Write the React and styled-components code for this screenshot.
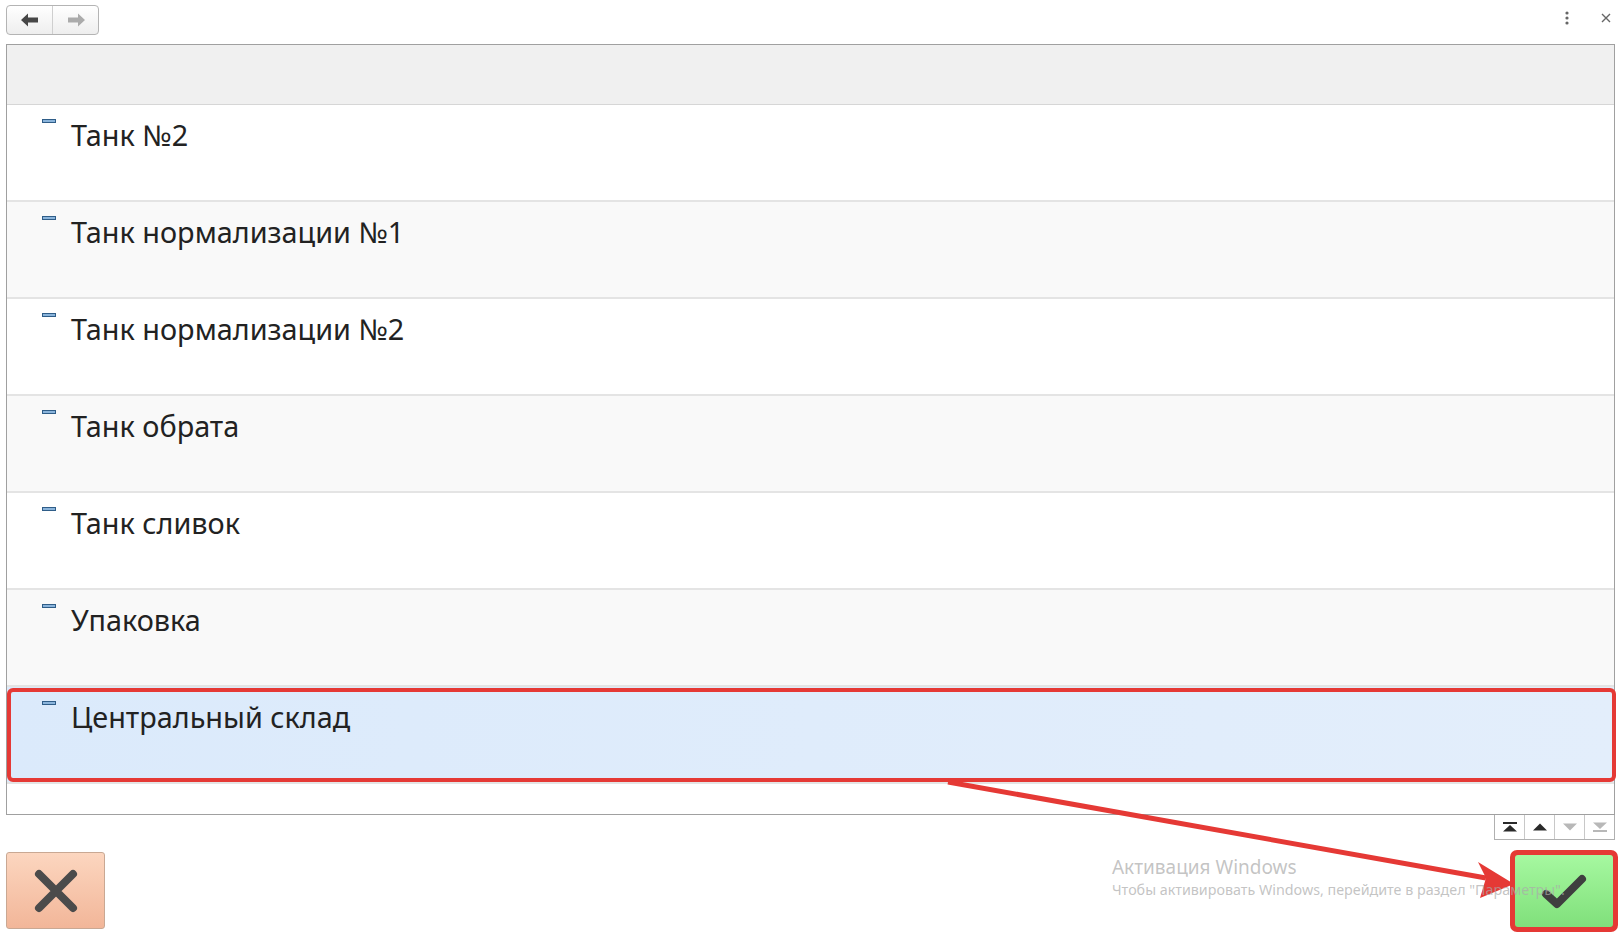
import React from "react";
import styled, { createGlobalStyle } from "styled-components";

const Global = createGlobalStyle`
  html, body { margin: 0; padding: 0; background: #fff; }
  body { width: 1620px; height: 939px; overflow: hidden; font-family: "Noto Sans", "Open Sans", sans-serif; }
`;

const Page = styled.div`
  position: relative;
  width: 1620px;
  height: 939px;
  padding: 0 5px 0 6px;
  box-sizing: border-box;
  display: flex;
  flex-direction: column;
`;

const TopBar = styled.div`
  height: 44px;
  display: flex;
  align-items: flex-start;
  justify-content: space-between;
`;

const NavGroup = styled.div`
  margin-top: 5px;
  display: flex;
  height: 30px;
  border: 1px solid #b4b4b4;
  border-radius: 4px;
  background: linear-gradient(#ffffff, #eeeeee);
  box-sizing: border-box;
  overflow: hidden;
`;

const NavBtn = styled.div`
  width: 45px;
  display: flex;
  align-items: center;
  justify-content: center;
  border-left: ${(p) => (p.$first ? "none" : "1px solid #cfcfcf")};
`;

const WinTools = styled.div`
  display: flex;
  align-items: center;
  gap: 32px;
  margin-top: 11px;
  margin-right: 4px;
`;

const List = styled.div`
  height: 771px;
  border: 1px solid #a0a0a0;
  box-sizing: border-box;
  display: flex;
  flex-direction: column;
  background: #fff;
`;

const ListHeader = styled.div`
  height: 59px;
  background: #f0f0f0;
  border-bottom: 1px solid #d6d6d6;
  flex: none;
`;

const Row = styled.div`
  position: relative;
  height: 97px;
  flex: none;
  box-sizing: border-box;
  display: flex;
  align-items: flex-start;
  padding: 12px 0 0 35px;
  background: ${(p) => (p.$selected ? "linear-gradient(90deg,#dbeafb,#e3eefb)" : p.$alt ? "#f9f9f9" : "#ffffff")};
  border-bottom: 2px solid #e4e4e4;
  &::after {
    content: "";
    display: ${(p) => (p.$selected ? "block" : "none")};
    position: absolute;
    left: 0;
    right: -2px;
    top: 1px;
    bottom: 0px;
    border: 4px solid #e53935;
    border-radius: 6px;
  }
`;

const Marker = styled.span`
  width: 14px;
  height: 4px;
  box-sizing: border-box;
  background: #8ab4db;
  border: 1px solid #2f5d88;
  margin-top: 2px;
  flex: none;
`;

const RowText = styled.span`
  margin-left: 15px;
  font-size: 28.8px;
  line-height: 36px;
  color: #222;
  white-space: nowrap;
`;

const Footer = styled.div`
  flex: 1;
  display: flex;
  flex-direction: column;
`;

const ScrollGroup = styled.div`
  align-self: flex-end;
  display: flex;
  width: 121px;
  height: 25px;
  border: 1px solid #b0b0b0;
  border-top: none;
  box-sizing: border-box;
`;

const ScrollBtn = styled.div`
  flex: 1;
  display: flex;
  align-items: center;
  justify-content: center;
  border-left: ${(p) => (p.$first ? "none" : "1px solid #c8c8c8")};
  background: #fff;
  color: ${(p) => (p.$disabled ? "#b8b8b8" : "#2a2a2a")};
`;

const BottomRow = styled.div`
  margin-top: 12px;
  display: flex;
  align-items: flex-start;
  justify-content: space-between;
`;

const CancelBtn = styled.div`
  width: 99px;
  height: 77px;
  box-sizing: border-box;
  border: 1px solid #c9a893;
  border-radius: 3px;
  background: linear-gradient(#fcd6bf, #f2b699);
  display: flex;
  align-items: center;
  justify-content: center;
`;

const Watermark = styled.div`
  position: absolute;
  left: 1112px;
  top: 855px;
  z-index: 3;
  color: rgba(170, 170, 170, 0.7);
  display: flex;
  flex-direction: column;
  font-family: "Noto Sans", sans-serif;
  pointer-events: none;
`;

const WmTitle = styled.div`
  font-size: 19px;
  line-height: 24px;
`;

const WmText = styled.div`
  font-size: 14.3px;
  line-height: 20px;
  margin-top: 1px;
  white-space: nowrap;
`;

const OkWrap = styled.div`
  margin-top: -2px;
  margin-right: -3px;
  padding: 5px;
  border-radius: 7px;
  background: #e53935;
  position: relative;
  z-index: 2;
`;

const OkBtn = styled.div`
  width: 98px;
  height: 72px;
  border-radius: 3px;
  background: linear-gradient(#a6f8a0, #80e07b);
  display: flex;
  align-items: center;
  justify-content: center;
`;

const Overlay = styled.svg`
  position: absolute;
  left: 0;
  top: 0;
  pointer-events: none;
  z-index: 1;
`;

const items = [
  "Танк №2",
  "Танк нормализации №1",
  "Танк нормализации №2",
  "Танк обрата",
  "Танк сливок",
  "Упаковка",
  "Центральный склад",
];

const ArrowLeft = ({ color }) => (
  <svg width="18" height="14" viewBox="0 0 18 14">
    <path d="M0 7 L7 0.5 L7 4.5 L17 4.5 L17 9.5 L7 9.5 L7 13.5 Z" fill={color} />
  </svg>
);

const ArrowRight = ({ color }) => (
  <svg width="18" height="14" viewBox="0 0 18 14">
    <path d="M18 7 L11 0.5 L11 4.5 L1 4.5 L1 9.5 L11 9.5 L11 13.5 Z" fill={color} />
  </svg>
);

export default function App() {
  return (
    <>
      <Global />
      <Page>
        <TopBar>
          <NavGroup>
            <NavBtn $first>
              <ArrowLeft color="#474747" />
            </NavBtn>
            <NavBtn>
              <ArrowRight color="#ababab" />
            </NavBtn>
          </NavGroup>
          <WinTools>
            <svg width="4" height="14" viewBox="0 0 4 14">
              <circle cx="2" cy="2" r="1.6" fill="#666" />
              <circle cx="2" cy="7" r="1.6" fill="#666" />
              <circle cx="2" cy="12" r="1.6" fill="#666" />
            </svg>
            <svg width="10" height="10" viewBox="0 0 10 10">
              <path d="M1 1 L9 9 M9 1 L1 9" stroke="#666" strokeWidth="1.4" />
            </svg>
          </WinTools>
        </TopBar>
        <List>
          <ListHeader />
          {items.map((t, i) => (
            <Row key={t} $alt={i % 2 === 1} $selected={i === items.length - 1}>
              <Marker />
              <RowText>{t}</RowText>
            </Row>
          ))}
        </List>
        <Footer>
          <ScrollGroup>
            <ScrollBtn $first>
              <svg width="14" height="10" viewBox="0 0 14 10">
                <rect x="0" y="0" width="14" height="2" fill="currentColor" />
                <path d="M0 9.5 L7 3 L14 9.5 Z" fill="currentColor" />
              </svg>
            </ScrollBtn>
            <ScrollBtn>
              <svg width="14" height="8" viewBox="0 0 14 8">
                <path d="M0 7.5 L7 0.5 L14 7.5 Z" fill="currentColor" />
              </svg>
            </ScrollBtn>
            <ScrollBtn $disabled>
              <svg width="14" height="8" viewBox="0 0 14 8">
                <path d="M0 0.5 L7 7.5 L14 0.5 Z" fill="currentColor" />
              </svg>
            </ScrollBtn>
            <ScrollBtn $disabled>
              <svg width="14" height="10" viewBox="0 0 14 10">
                <path d="M0 0.5 L7 7 L14 0.5 Z" fill="currentColor" />
                <rect x="0" y="8" width="14" height="2" fill="currentColor" />
              </svg>
            </ScrollBtn>
          </ScrollGroup>
          <BottomRow>
            <CancelBtn>
              <svg width="44" height="44" viewBox="0 0 44 44">
                <path d="M5 5 L39 39 M39 5 L5 39" stroke="#4b4b4b" strokeWidth="8" strokeLinecap="round" />
              </svg>
            </CancelBtn>
            <OkWrap>
              <OkBtn>
                <svg width="46" height="36" viewBox="0 0 46 36">
                  <path d="M5 21 L16 31 L41 6" fill="none" stroke="#3f3f3f" strokeWidth="8" strokeLinecap="round" strokeLinejoin="round" />
                </svg>
              </OkBtn>
            </OkWrap>
          </BottomRow>
        </Footer>
        <Watermark>
          <WmTitle>Активация Windows</WmTitle>
          <WmText>Чтобы активировать Windows, перейдите в раздел "Параметры".</WmText>
        </Watermark>
        <Overlay width="1620" height="939" viewBox="0 0 1620 939">
          <line x1="948" y1="782" x2="1486" y2="878" stroke="#e53935" strokeWidth="5" />
          <path d="M1514 884 L1478 862 L1486 878 L1480 898 Z" fill="#e53935" />
        </Overlay>
      </Page>
    </>
  );
}
